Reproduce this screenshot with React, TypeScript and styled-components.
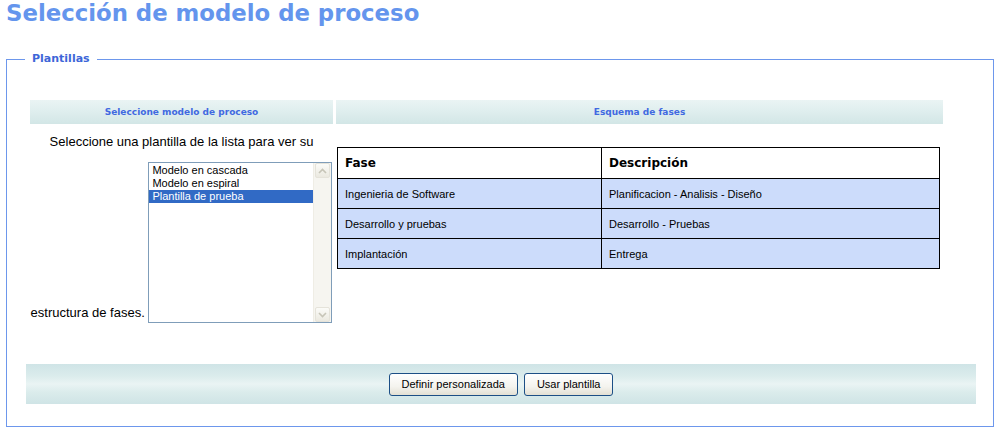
import styled, { createGlobalStyle } from "styled-components";

const GlobalStyle = createGlobalStyle`
  html, body {
    margin: 0;
    padding: 0;
    background: #ffffff;
  }
  body {
    font-family: "DejaVu Sans", Verdana, sans-serif;
    color: #000;
  }
`;

const phases = [
  { fase: "Ingenieria de Software", desc: "Planificacion - Analisis - Diseño" },
  { fase: "Desarrollo y pruebas", desc: "Desarrollo - Pruebas" },
  { fase: "Implantación", desc: "Entrega" },
];

const templates = ["Modelo en cascada", "Modelo en espiral", "Plantilla de prueba"];

export default function App() {
  return (
    <Page>
      <GlobalStyle />
      <Title>Selección de modelo de proceso</Title>
      <Fieldset>
        <Legend>Plantillas</Legend>
        <Columns>
          <Column>
            <HeaderBar>Seleccione modelo de proceso</HeaderBar>
            <Prompt>
              Seleccione una plantilla de la lista para ver su estructura de fases.{" "}
              <ListBox>
                <Options>
                  {templates.map((t, i) => (
                    <Option key={t} $selected={i === 2}>
                      {t}
                    </Option>
                  ))}
                </Options>
                <ScrollBar>
                  <ScrollButton>
                    <svg width="9" height="6" viewBox="0 0 9 6">
                      <path d="M1 5 L4.5 1.5 L8 5" fill="none" stroke="#c7c5b8" strokeWidth="1.6" />
                    </svg>
                  </ScrollButton>
                  <ScrollButton>
                    <svg width="9" height="6" viewBox="0 0 9 6">
                      <path d="M1 1 L4.5 4.5 L8 1" fill="none" stroke="#c7c5b8" strokeWidth="1.6" />
                    </svg>
                  </ScrollButton>
                </ScrollBar>
              </ListBox>
            </Prompt>
          </Column>
          <Column>
            <HeaderBar>Esquema de fases</HeaderBar>
            <PhaseTable>
              <thead>
                <tr>
                  <HeadCell $first>Fase</HeadCell>
                  <HeadCell>Descripción</HeadCell>
                </tr>
              </thead>
              <tbody>
                {phases.map((p) => (
                  <tr key={p.fase}>
                    <Cell>{p.fase}</Cell>
                    <Cell>{p.desc}</Cell>
                  </tr>
                ))}
              </tbody>
            </PhaseTable>
          </Column>
        </Columns>
        <ButtonBar>
          <Button>Definir personalizada</Button>
          <Button>Usar plantilla</Button>
        </ButtonBar>
      </Fieldset>
    </Page>
  );
}

const Page = styled.div`
  padding: 0 6px;
  width: 988px;
`;

const Title = styled.h1`
  margin: 0;
  padding: 0;
  height: 52px;
  font-family: "DejaVu Sans", Verdana, sans-serif;
  font-size: 22.8px;
  line-height: 27px;
  font-weight: bold;
  color: #6495ed;
`;

const Fieldset = styled.fieldset`
  margin: 0;
  padding: 34px 17px 22px 19px;
  border: 1px solid #6d97ec;
  width: 950px;
`;

const Legend = styled.legend`
  margin-left: -1px;
  padding: 0 7px;
  font-family: "DejaVu Sans", Verdana, sans-serif;
  font-size: 11px;
  line-height: 14px;
  font-weight: bold;
  color: #3d66d8;
`;

const Columns = styled.div`
  display: grid;
  grid-template-columns: 303px 607px;
  column-gap: 3px;
  margin-left: 4px;
  height: 264px;
`;

const Column = styled.div`
  display: flex;
  flex-direction: column;
`;

const HeaderBar = styled.div`
  height: 24px;
  display: flex;
  align-items: center;
  justify-content: center;
  background: linear-gradient(to bottom, #eaf4f4 0%, #dcecec 60%, #d2e6e6 100%);
  font-family: "DejaVu Sans", Verdana, sans-serif;
  font-size: 9px;
  font-weight: bold;
  color: #4169e1;
`;

const Prompt = styled.div`
  margin: 10px 0 0;
  text-align: center;
  font-family: "Liberation Sans", Arial, sans-serif;
  font-size: 13px;
  line-height: 15px;
  color: #000;
`;

const ListBox = styled.div`
  display: inline-flex;
  vertical-align: bottom;
  width: 184px;
  height: 161px;
  box-sizing: border-box;
  margin-top: 13px;
  margin-bottom: -3px;
  border: 1px solid #7f9db9;
  background: #fff;
  text-align: left;
`;

const Options = styled.div`
  flex: 1;
  padding-top: 1px;
`;

const Option = styled.div<{ $selected?: boolean }>`
  height: 13px;
  line-height: 13px;
  padding-left: 3px;
  font-family: "Liberation Sans", Arial, sans-serif;
  font-size: 11px;
  white-space: nowrap;
  background: ${(p) => (p.$selected ? "#316ac5" : "transparent")};
  color: ${(p) => (p.$selected ? "#fff" : "#000")};
`;

const ScrollBar = styled.div`
  width: 17px;
  display: flex;
  flex-direction: column;
  justify-content: space-between;
  background: #f6f5f0;
  border-left: 1px solid #efede5;
`;

const ScrollButton = styled.div`
  width: 15px;
  height: 15px;
  margin: 0 0 0 1px;
  box-sizing: border-box;
  border: 1px solid #e5e3da;
  border-radius: 2px;
  background: linear-gradient(to bottom, #fbfbf8, #ebe9e0);
  display: flex;
  align-items: center;
  justify-content: center;
`;

const PhaseTable = styled.table`
  margin: 23px 0 0 1px;
  width: 603px;
  border-collapse: collapse;
  border: 1px solid #000;
`;

const HeadCell = styled.th<{ $first?: boolean }>`
  height: 30px;
  padding: 0 0 0 7px;
  width: ${(p) => (p.$first ? "256px" : "auto")};
  border: 1px solid #000;
  background: #fff;
  text-align: left;
  font-family: "DejaVu Sans", Verdana, sans-serif;
  font-size: 12px;
  font-weight: bold;
`;

const Cell = styled.td`
  height: 29px;
  padding: 0 0 0 7px;
  border: 1px solid #000;
  background: #ccdcfb;
  font-family: "Liberation Sans", Arial, sans-serif;
  font-size: 11px;
  color: #000;
`;

const ButtonBar = styled.div`
  height: 40px;
  display: flex;
  align-items: center;
  justify-content: center;
  gap: 6px;
  background: linear-gradient(
    to bottom,
    #cfe4e6 0%,
    #dbecec 30%,
    #eaf4f4 50%,
    #dbecec 70%,
    #cfe4e6 100%
  );
`;

const Button = styled.button`
  height: 23px;
  padding: 0 12px;
  border: 1px solid #1c4f86;
  border-radius: 3px;
  background: linear-gradient(to bottom, #ffffff 0%, #f4f3ee 60%, #e3e0d4 100%);
  font-family: "Liberation Sans", Arial, sans-serif;
  font-size: 11px;
  color: #000;
  cursor: pointer;
`;
